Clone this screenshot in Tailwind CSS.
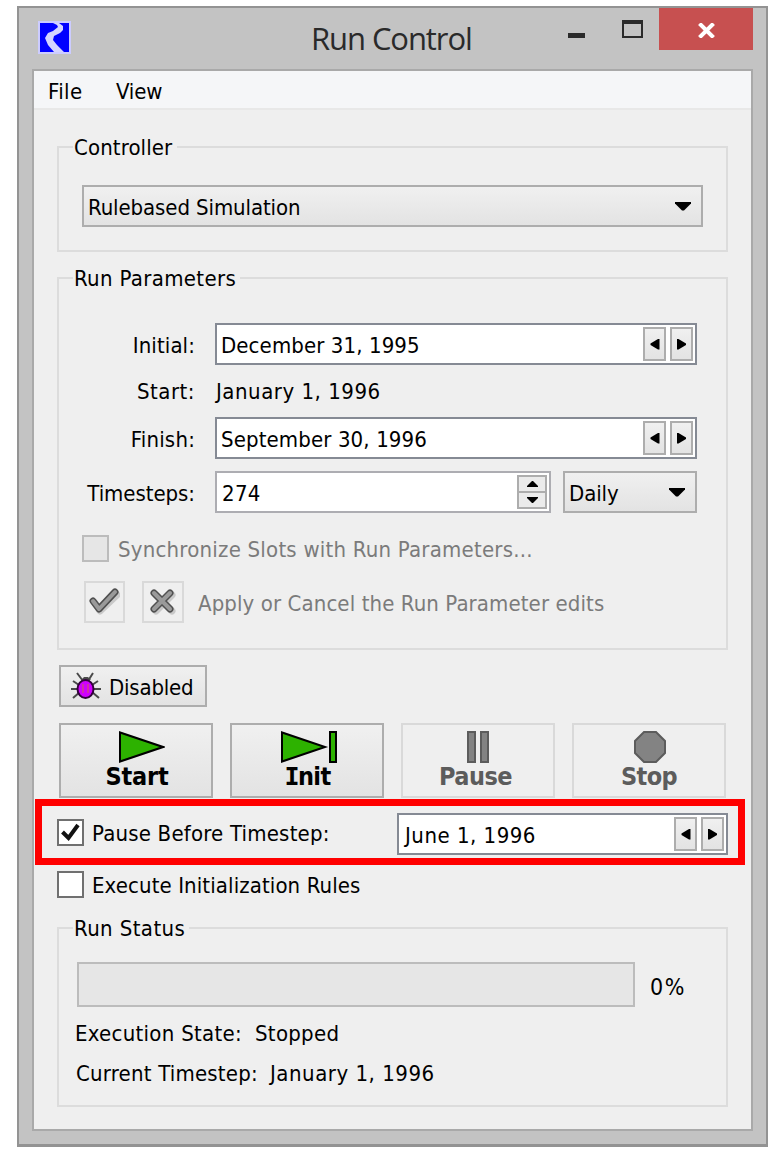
<!DOCTYPE html>
<html lang="en">
<head>
<meta charset="utf-8">
<title>Run Control</title>
<script src="https://cdn.jsdelivr.net/npm/@tailwindcss/browser@4"></script>
</head>
<body class="bg-white">
<svg class="hidden">
  <symbol id="down" viewBox="0 0 16 9"><path d="M0 0h16v1.500L9 8.500H7L0 1.500z"/></symbol>
  <symbol id="left" viewBox="0 0 10 12"><path d="M9.500 1v10.500H8L0.500 7V5.500L8 1z"/></symbol>
  <symbol id="right" viewBox="0 0 10 12"><path d="M0 1v10.500h1.500L9 7V5.500L1.500 1z"/></symbol>
</svg>
<main class="flex h-[1158px] w-[784px] pl-[17px] pt-[6px] font-['DejaVu_Sans_Condensed','DejaVu_Sans',sans-serif] text-[22px] leading-[28px] whitespace-nowrap text-black">
  <div class="flex h-[1141px] w-[751px] flex-col border-2 border-b-3 border-[#939393] bg-[#c3c3c3]">
    <!-- Title bar -->
    <header class="flex h-[61px] shrink-0 items-start">
      <svg class="ml-[19px] mt-[13px] size-[33px]" viewBox="0 0 33 33"><path fill="#ccccff" d="M0 0h33v33H0z"/><path fill="#00f" d="M2 2h29v29H2z"/><path fill="#d4d4ff" d="M15 2h6l4 3v4l-3 3-6 3-1 4 4 5 7 7H16l-6-7-3-7 3-5 5-2 5-4-1-2z"/></svg>
      <h1 class="ml-[240px] mt-[9px] w-[171px] font-['Open_Sans',sans-serif] text-[31px] leading-[42px] tracking-[-1.08px] text-[#2a2a2a]">Run Control</h1>
      <span class="ml-[86px] mt-[25px] h-[5px] w-[17px] bg-[#2a2a2a]"></span>
      <span class="ml-[37px] mt-[12px] h-[18px] w-[21px] border-2 border-t-4 border-[#2a2a2a]"></span>
      <button class="ml-[16px] flex h-[42px] w-[94px] items-center justify-center bg-[#c75050]">
        <svg class="mt-[2px] h-[15px] w-[17px]" viewBox="0 0 17 15" stroke="#fff" stroke-width="4"><path d="M1.500 0.500l14 14M15.500.5l-14 14"/></svg>
      </button>
    </header>
    <!-- Client area -->
    <div class="ml-[13px] flex h-[1062px] w-[721px] shrink-0 flex-col border-2 border-[#a9a9a9] bg-[#efefef]">
      <nav class="flex h-[39px] shrink-0 gap-[33px] border-b-2 border-[#e8e8e8] bg-[#f5f6f8] pl-[14px] pt-[7px]"><span class="w-[35px] tracking-[0.4px]">File</span><span class="tracking-[-0.2px]">View</span></nav>

      <div class="flex flex-col pl-[23px]">
        <fieldset class="mt-[22px] h-[120px] w-[671px] border-2 border-[#dcdcdc] px-[14px]">
          <legend class="h-[30px] pl-px pr-[5px] pt-[2px] tracking-[0.1px]">Controller</legend>
          <div class="ml-[9px] mt-[23px] flex h-[42px] w-[621px] items-center justify-between border-2 border-[#adadad] bg-linear-to-b from-[#f0f0f0] to-[#e3e3e3] pl-[4px] pr-[10px]">
            <span class="pt-[4px] tracking-[-0.1px]">Rulebased Simulation</span>
            <svg class="h-[9px] w-[16px]"><use href="#down"/></svg>
          </div>
        </fieldset>

        <fieldset class="mt-[11px] h-[387px] w-[671px] border-2 border-[#dcdcdc] px-[14px]">
          <legend class="h-[30px] pl-px pr-[4px] pt-[2px] tracking-[0.34px]">Run Parameters</legend>
          <div class="mt-[30px] flex h-[42px]">
            <span class="w-[122px] pt-[9px] text-right tracking-[0.1px]">Initial:</span>
            <div class="ml-[20px] flex h-[42px] w-[482px] items-center gap-[4px] border-2 border-[#858a94] bg-white pl-[4px] pr-[2px]">
              <span class="flex-1 pt-[4px] tracking-[0.1px]">December 31, 1995</span>
              <button class="flex h-[34px] w-[23px] items-center justify-center border-2 border-[#adadad] bg-linear-to-b from-[#f0f0f0] to-[#e3e3e3]"><svg class="h-[12px] w-[10px]"><use href="#left"/></svg></button>
              <button class="flex h-[34px] w-[23px] items-center justify-center border-2 border-[#adadad] bg-linear-to-b from-[#f0f0f0] to-[#e3e3e3]"><svg class="h-[12px] w-[10px]"><use href="#right"/></svg></button>
            </div>
          </div>
          <div class="flex h-[52px] pt-[13px]">
            <span class="w-[122px] text-right tracking-[0.5px]">Start:</span>
            <span class="ml-[21px] tracking-[0.52px]">January 1, 1996</span>
          </div>
          <div class="flex h-[42px]">
            <span class="w-[122px] pt-[9px] text-right tracking-[0.2px]">Finish:</span>
            <div class="ml-[20px] flex h-[42px] w-[482px] items-center gap-[4px] border-2 border-[#858a94] bg-white pl-[4px] pr-[2px]">
              <span class="flex-1 pt-[4px] tracking-[0.12px]">September 30, 1996</span>
              <button class="flex h-[34px] w-[23px] items-center justify-center border-2 border-[#adadad] bg-linear-to-b from-[#f0f0f0] to-[#e3e3e3]"><svg class="h-[12px] w-[10px]"><use href="#left"/></svg></button>
              <button class="flex h-[34px] w-[23px] items-center justify-center border-2 border-[#adadad] bg-linear-to-b from-[#f0f0f0] to-[#e3e3e3]"><svg class="h-[12px] w-[10px]"><use href="#right"/></svg></button>
            </div>
          </div>
          <div class="mt-[12px] flex h-[42px]">
            <span class="w-[122px] pt-[9px] text-right tracking-[-0.05px]">Timesteps:</span>
            <div class="ml-[20px] flex h-[42px] w-[336px] items-center justify-between border-2 border-[#adadb2] bg-white pl-[5px] pr-[2px]">
              <span class="pt-[3px] tracking-[0.3px]">274</span>
              <div class="flex h-[34px] w-[30px] flex-col border-2 border-[#adadad] bg-[#ebebeb]">
                <span class="flex flex-1 items-center justify-center border-b-2 border-[#adadad]"><svg class="h-[6px] w-[11px]" viewBox="0 0 11 6"><path d="M0 6V5l5-5h1l5 5v1z"/></svg></span>
                <span class="flex flex-1 items-center justify-center"><svg class="h-[6px] w-[11px]" viewBox="0 0 11 6"><path d="M0 0v1l5 5h1l5-5V0z"/></svg></span>
              </div>
            </div>
            <div class="ml-[12px] flex h-[42px] w-[134px] items-center justify-between border-2 border-[#adadad] bg-linear-to-b from-[#f0f0f0] to-[#e3e3e3] pl-[4px] pr-[10px]">
              <span class="pt-[3px] tracking-[-0.1px]">Daily</span>
              <svg class="h-[9px] w-[16px]"><use href="#down"/></svg>
            </div>
          </div>
          <div class="ml-[9px] mt-[22px] flex h-[27px] gap-[9px] text-[#7b7b7b]">
            <span class="h-[27px] w-[27px] border-2 border-[#bcbcbc] bg-[#e6e6e6]"></span>
            <span class="pt-[1px] tracking-[0.22px]">Synchronize Slots with Run Parameters...</span>
          </div>
          <div class="ml-[11px] mt-[19px] flex h-[42px] text-[#7b7b7b]">
            <button class="flex h-[42px] w-[41px] items-center justify-center border-2 border-[#d9d9d9]">
              <svg class="h-[28px] w-[31px]" viewBox="0 0 31 28" fill="none" stroke-linecap="round" stroke-linejoin="round"><path stroke="#c9c9c9" stroke-width="7" d="M6 15l5 8L28 7"/><path stroke="#505050" stroke-width="7" d="M4 13l6 8L26 4"/><path stroke="#9a9a9a" stroke-width="4" d="M4 13l6 8L26 4"/></svg>
            </button>
            <button class="ml-[17px] flex h-[42px] w-[42px] items-center justify-center border-2 border-[#d9d9d9]">
              <svg class="h-[28px] w-[28px]" viewBox="0 0 28 28" fill="none" stroke-linecap="round"><path stroke="#c9c9c9" stroke-width="7" d="M7 7l16 16M23 7L7 23"/><path stroke="#505050" stroke-width="7" d="M5 5l16 16M21 5L5 21"/><path stroke="#9a9a9a" stroke-width="4" d="M5 5l16 16M21 5L5 21"/></svg>
            </button>
            <span class="ml-[14px] pt-[9px] tracking-[0.1px]">Apply or Cancel the Run Parameter edits</span>
          </div>
        </fieldset>

        <button class="ml-[2px] mt-[15px] flex h-[42px] w-[148px] items-center border-2 border-[#adadad] bg-linear-to-b from-[#f0f0f0] to-[#e3e3e3] pl-[10px]">
          <svg class="h-[28px] w-[30px]" viewBox="0 0 30 28"><g stroke="#4a4a4a" stroke-width="2" fill="none"><path d="M6 1l6 8M22 1l-5 8M2 9l6 4M27 9l-6 4M0 17h8M22 17h8M2 26l7-6M28 26l-7-6"/></g><path d="M10 8l3-3h4l3 3z" fill="#4a4a4a"/><ellipse cx="14.500" cy="17" rx="8" ry="9" fill="#d000ff" stroke="#33003d" stroke-width="2"/><path stroke="#d22fa8" stroke-width="2" d="M12 12v9M17 12v9"/></svg>
          <span class="ml-[8px] pt-[4px] tracking-[-0.2px]">Disabled</span>
        </button>

        <div class="ml-[2px] mt-[16px] flex h-[75px] gap-[17px] text-[25px] font-bold">
          <button class="flex h-[75px] w-[154px] flex-col items-center border-2 border-[#adadad] bg-linear-to-b from-[#f0f0f0] to-[#e3e3e3] pt-[6px]">
            <svg class="ml-[11px] h-[32px] w-[47px]" viewBox="0 0 47 32"><path d="M2 1.500v29L45 16z" fill="#2db200" stroke="#000" stroke-width="2"/></svg>
            <span class="ml-[2px] tracking-[-0.2px]">Start</span>
          </button>
          <button class="flex h-[75px] w-[154px] flex-col items-center border-2 border-[#adadad] bg-linear-to-b from-[#f0f0f0] to-[#e3e3e3] pt-[6px]">
            <svg class="ml-[2px] h-[32px] w-[57px]" viewBox="0 0 57 32"><path d="M2 1.500v29L45 16zM50 1h6v30h-6z" fill="#2db200" stroke="#000" stroke-width="2"/></svg>
            <span class="ml-px"><span class="font-['DejaVu_Sans_Mono',monospace] tracking-[-1.500px]">I</span><span class="tracking-[-0.6px]">nit</span></span>
          </button>
          <button class="flex h-[75px] w-[154px] flex-col items-center border-2 border-[#d9d9d9] pt-[6px] text-[#5c5c5c]">
            <svg class="h-[32px] w-[22px]" viewBox="0 0 22 32"><path d="M1 1h7v30H1zM14 1h7v30h-7z" fill="#838383" stroke="#5c5c5c" stroke-width="2"/></svg>
            <span class="mr-[5px] tracking-[-0.5px]">Pause</span>
          </button>
          <button class="flex h-[75px] w-[154px] flex-col items-center border-2 border-[#d9d9d9] pt-[6px] text-[#5c5c5c]">
            <svg class="ml-[2px] h-[32px] w-[32px]" viewBox="0 0 32 32"><path d="M10 1h12l9 9v12l-9 9H10l-9-9V10z" fill="#838383" stroke="#5c5c5c" stroke-width="2"/></svg>
            <span class="tracking-[-0.6px]">Stop</span>
          </button>
        </div>

        <!-- Highlighted option -->
        <div class="-ml-[22px] mt-px flex h-[66px] w-[710px] items-start border-7 border-[#f00] pl-[15px] pt-[7px]">
          <span class="mt-[6px] flex size-[27px] items-center justify-center border-2 border-[#707070] bg-white"><svg class="size-[19px]" viewBox="0 0 19 19" fill="none" stroke="#111" stroke-width="4"><path d="M1.500 9l6 6L17 2"/></svg></span>
          <span class="ml-[8px] mt-[7px] w-[305px] tracking-[0.2px]">Pause Before Timestep:</span>
          <div class="flex h-[42px] w-[331px] items-center gap-[4px] border-2 border-[#858a94] bg-white pl-[6px] pr-[2px]">
            <span class="flex-1 pt-[3px] tracking-[0.5px]">June 1, 1996</span>
            <button class="flex h-[34px] w-[23px] items-center justify-center border-2 border-[#adadad] bg-linear-to-b from-[#f0f0f0] to-[#e3e3e3]"><svg class="h-[12px] w-[10px]"><use href="#left"/></svg></button>
            <button class="flex h-[34px] w-[23px] items-center justify-center border-2 border-[#adadad] bg-linear-to-b from-[#f0f0f0] to-[#e3e3e3]"><svg class="h-[12px] w-[10px]"><use href="#right"/></svg></button>
          </div>
        </div>

        <div class="mt-[6px] flex h-[27px] gap-[8px]">
          <span class="size-[27px] border-2 border-[#707070] bg-white"></span>
          <span class="pt-px tracking-[0.1px]">Execute Initialization Rules</span>
        </div>

        <fieldset class="mt-[15px] h-[194px] w-[671px] border-2 border-[#dcdcdc] px-[14px]">
          <legend class="h-[30px] pl-px pr-[4px] pt-[2px] tracking-[0.4px]">Run Status</legend>
          <div class="ml-[4px] mt-[19px] flex h-[45px]">
            <div class="h-[45px] w-[558px] border-2 border-[#bcbcbc] bg-[#e6e6e6]"></div>
            <span class="ml-[15px] pt-[11px] text-[23px] tracking-[1.6px]">0%</span>
          </div>
          <div class="ml-[2px] mt-[13px] flex"><span class="w-[180px] tracking-[0.28px]">Execution State:</span><span class="tracking-[0.28px]">Stopped</span></div>
          <div class="ml-[3px] mt-[12px] flex"><span class="w-[194px] tracking-[0.2px]">Current Timestep:</span><span class="tracking-[0.52px]">January 1, 1996</span></div>
        </fieldset>
      </div>
    </div>
  </div>
</main>
</body>
</html>
